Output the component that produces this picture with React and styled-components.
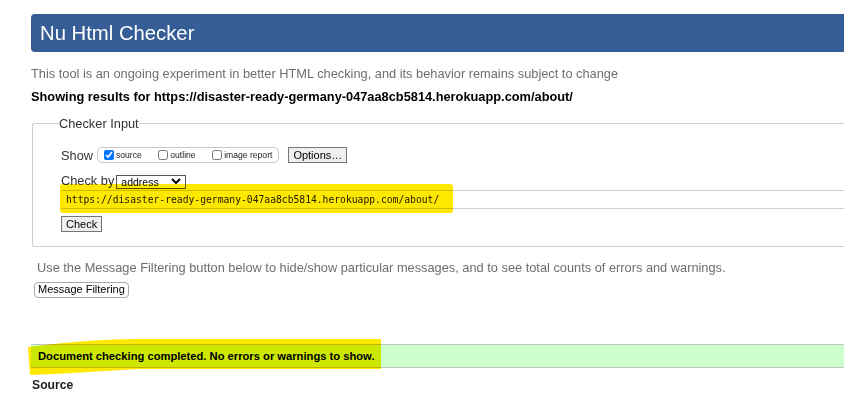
import React from "react";
import styled, { createGlobalStyle } from "styled-components";

const Global = createGlobalStyle`
  html, body { margin: 0; padding: 0; background: #fff; overflow: hidden; }
  body { font-family: "Liberation Sans", Arial, sans-serif; color: #000; }
`;

const Page = styled.div`
  width: 900px;
  padding: 14px 0 0 31px;
`;

const Header = styled.h1`
  margin: 0;
  height: 38px;
  line-height: 38px;
  padding-left: 9px;
  background: #365d95;
  color: #fff;
  font-size: 20.3px;
  font-weight: normal;
  border-radius: 4px 0 0 4px;
`;

const Intro = styled.p`
  margin: 14px 0 0;
  font-size: 12.8px;
  line-height: 16px;
  color: #6e6e6e;
`;

const Showing = styled.p`
  margin: 7px 0 0;
  font-size: 12.8px;
  line-height: 16px;
  font-weight: bold;
`;

const Fieldset = styled.fieldset`
  margin: 10px 0 0 1px;
  padding: 16px 0 14px 28px;
  border: 1px solid #cfcfcf;
  border-right: none;
  border-radius: 3px 0 0 3px;
`;

const Legend = styled.legend`
  margin-left: -2px;
  padding: 0;
  font-size: 12.8px;
  line-height: 16px;
  color: #333;
  position: relative;
  top: 1px;
`;

const Row = styled.div`
  display: flex;
  align-items: center;
  font-size: 12.8px;
  color: #333;
  margin-top: ${(p) => p.$mt || 0}px;
`;

const Group = styled.span`
  display: inline-flex;
  align-items: center;
  gap: 16.5px;
  margin-left: 4px;
  height: 14px;
  padding: 0 6px;
  border: 1px solid #c8c8c8;
  border-radius: 5px;
`;

const Check = styled.label`
  display: inline-flex;
  align-items: center;
  font-size: 8.6px;
  color: #222;
  input {
    width: 10px;
    height: 10px;
    margin: 0 2px 0 0;
  }
`;

const Btn = styled.button`
  font-family: "Liberation Sans", Arial, sans-serif;
  font-size: 11px;
  line-height: 13px;
  padding: 0 ${(p) => p.$px || 4}px;
  height: ${(p) => p.$h || 16}px;
  color: #000;
  background: ${(p) => (p.$soft ? "#fff" : "#efefef")};
  border: 1px solid ${(p) => (p.$soft ? "#aaa" : "#767676")};
  border-radius: ${(p) => (p.$soft ? 4 : 0)}px;
  margin-left: ${(p) => p.$ml || 0}px;
`;

const SelectWrap = styled.span`
  position: relative;
  display: inline-block;
  margin-left: 2px;
  width: 70px;
  height: 14px;
`;

const Select = styled.select`
  appearance: none;
  box-sizing: border-box;
  width: 70px;
  height: 14px;
  padding: 0 0 0 4px;
  font-family: "Liberation Sans", Arial, sans-serif;
  font-size: 10.5px;
  line-height: 12px;
  border: 1px solid #555;
  border-radius: 0;
  background: #fff;
  color: #000;
  outline: none;
`;

const Chevron = styled.svg`
  position: absolute;
  right: 5px;
  top: 4px;
  pointer-events: none;
`;

const UrlWrap = styled.div`
  position: relative;
  margin-top: 2px;
`;

const UrlInput = styled.div`
  height: 17px;
  line-height: 17px;
  border-top: 1px solid #cfcfcf;
  border-bottom: 1px solid #cfcfcf;
  padding-left: 5px;
  font-family: "DejaVu Sans Mono", "Liberation Mono", monospace;
  font-size: 9.7px;
  color: #222;
`;

const Marker = styled.span`
  position: absolute;
  left: -1px;
  top: -6px;
  width: 393px;
  height: 29px;
  background: #ffe800;
  border-radius: 3px;
  mix-blend-mode: multiply;
  pointer-events: none;
`;

const Filter = styled.div`
  padding: 13px 0 0 6px;
`;

const FilterText = styled.p`
  margin: 0 0 3px;
  font-size: 12.8px;
  line-height: 16px;
  color: #6e6e6e;
`;

const Result = styled.div`
  position: relative;
  margin-top: 46px;
  height: 22px;
  line-height: 22px;
  padding-left: 7px;
  background: #ccffcc;
  border-top: 1px solid #c4c4c4;
  border-bottom: 1px solid #c4c4c4;
  font-size: 11.2px;
  font-weight: bold;
`;

const Stroke = styled.svg`
  position: absolute;
  left: 0;
  top: 0;
  overflow: visible;
  mix-blend-mode: multiply;
  pointer-events: none;
`;

const Source = styled.h3`
  margin: 9px 0 0 1px;
  font-size: 12.2px;
  line-height: 16px;
  font-weight: bold;
  color: #222;
`;

export default function App() {
  const url = "https://disaster-ready-germany-047aa8cb5814.herokuapp.com/about/";
  return (
    <>
      <Global />
      <Page>
        <Header>Nu Html Checker</Header>
        <Intro>
          This tool is an ongoing experiment in better HTML checking, and its behavior remains subject to change
        </Intro>
        <Showing>Showing results for {url}</Showing>
        <Fieldset>
          <Legend>Checker Input</Legend>
          <Row>
            Show
            <Group>
              <Check>
                <input type="checkbox" defaultChecked />
                source
              </Check>
              <Check>
                <input type="checkbox" />
                outline
              </Check>
              <Check>
                <input type="checkbox" />
                image report
              </Check>
            </Group>
            <Btn $ml={9}>Options…</Btn>
          </Row>
          <Row $mt={10}>
            Check by
            <SelectWrap>
              <Select defaultValue="address">
                <option value="address">address</option>
              </Select>
              <Chevron width="10" height="6" viewBox="0 0 10 6">
                <path d="M1 1 L5 5 L9 1" fill="none" stroke="#000" strokeWidth="2" />
              </Chevron>
            </SelectWrap>
          </Row>
          <UrlWrap>
            <UrlInput>{url}</UrlInput>
            <Marker />
          </UrlWrap>
          <Row $mt={7}>
            <Btn $px={4}>Check</Btn>
          </Row>
        </Fieldset>
        <Filter>
          <FilterText>
            Use the Message Filtering button below to hide/show particular messages, and to see total counts of errors and warnings.
          </FilterText>
          <Btn $soft $px={3} style={{ marginLeft: -3 }}>Message Filtering</Btn>
        </Filter>
        <Result>
          Document checking completed. No errors or warnings to show.
          <Stroke width="360" height="40">
            <path
              d="M-3 2 C29 -2, 69 -6, 104 -6 L350 -6 L350 24 L109 24 C69 26, 29 29, -1 30 Z"
              fill="#ffe800"
            />
          </Stroke>
        </Result>
        <Source>Source</Source>
      </Page>
    </>
  );
}
